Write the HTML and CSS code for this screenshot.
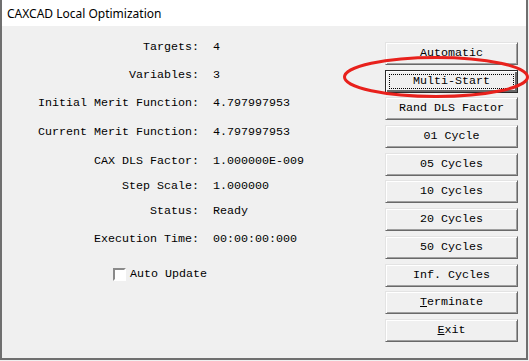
FILE: index.html
```html
<!DOCTYPE html>
<html>
<head>
<meta charset="utf-8">
<link rel="stylesheet" href="styles.css">
</head>
<body>
<div class="window">
  <div class="titlebar">CAXCAD Local Optimization</div>
  <div class="client">
    <div class="info">
      <div class="row r1"><span class="lbl">Targets:</span><span class="val">4</span></div>
      <div class="row r2"><span class="lbl">Variables:</span><span class="val">3</span></div>
      <div class="row r3"><span class="lbl">Initial Merit Function:</span><span class="val">4.797997953</span></div>
      <div class="row r4"><span class="lbl">Current Merit Function:</span><span class="val">4.797997953</span></div>
      <div class="row r5"><span class="lbl">CAX DLS Factor:</span><span class="val">1.000000E-009</span></div>
      <div class="row r6"><span class="lbl">Step Scale:</span><span class="val">1.000000</span></div>
      <div class="row r7"><span class="lbl">Status:</span><span class="val">Ready</span></div>
      <div class="row r8"><span class="lbl">Execution Time:</span><span class="val">00:00:00:000</span></div>
      <div class="check"><span class="box"></span><span>Auto Update</span></div>
    </div>
    <div class="buttons">
      <div class="btn">Automatic</div>
      <div class="btn focused"><span class="focus-rect">Multi-Start</span></div>
      <div class="btn">Rand DLS Factor</div>
      <div class="btn">01 Cycle</div>
      <div class="btn">05 Cycles</div>
      <div class="btn">10 Cycles</div>
      <div class="btn">20 Cycles</div>
      <div class="btn">50 Cycles</div>
      <div class="btn">Inf. Cycles</div>
      <div class="btn"><span class="u">T</span>erminate</div>
      <div class="btn"><span class="u">E</span>xit</div>
    </div>
  </div>
  <svg class="annot" width="529" height="361" viewBox="0 0 529 361">
    <ellipse cx="436" cy="77" rx="91.5" ry="19.5" fill="none" stroke="#e8211c" stroke-width="3"/>
  </svg>
</div>
</body>
</html>
```

FILE: styles.css
```css
html, body {
  margin: 0;
  padding: 0;
  background: #f0f0f0;
  width: 529px;
  height: 361px;
  overflow: hidden;
}
.window {
  position: relative;
  width: 524px;
  height: 358px;
  border-left: 2px solid #6f6f6f;
  border-right: 2px solid #6f6f6f;
  border-bottom: 2px solid #6f6f6f;
  background: #f0f0f0;
}
.titlebar {
  height: 26px;
  background: #ffffff;
  font-family: "Noto Sans", "Open Sans", sans-serif;
  font-size: 12px;
  line-height: 27px;
  padding-left: 5px;
  color: #000;
}
.client {
  display: flex;
  font-family: "Liberation Mono", "Courier New", monospace;
  font-size: 11.67px;
  color: #000;
}
.info {
  flex: 0 0 383px;
  padding-top: 14px;
}
.row {
  display: flex;
  height: 14px;
  line-height: 14px;
  white-space: pre;
}
.lbl {
  width: 197px;
  text-align: right;
}
.val {
  margin-left: 14px;
}
.r2 { margin-top: 14px; }
.r3 { margin-top: 14px; }
.r4 { margin-top: 15px; }
.r5 { margin-top: 15px; }
.r6 { margin-top: 11px; }
.r7 { margin-top: 11px; }
.r8 { margin-top: 14px; }
.check {
  display: flex;
  align-items: center;
  margin-top: 21px;
  margin-left: 111px;
  height: 14px;
  line-height: 14px;
  white-space: pre;
}
.box {
  width: 9px;
  height: 9px;
  margin-right: 4px;
  background: #fff;
  border-top: 2px solid #8a8a8a;
  border-left: 2px solid #8a8a8a;
  border-bottom: 2px solid #ffffff;
  border-right: 2px solid #ffffff;
  box-shadow: 0 0 0 0 transparent;
  outline: 0;
}
.buttons {
  width: 133px;
  padding-top: 16px;
  display: flex;
  flex-direction: column;
  gap: 4.7px;
}
.btn {
  box-sizing: border-box;
  height: 23px;
  line-height: 20px;
  text-align: center;
  background: #f0f0f0;
  border-top: 1px solid #e3e3e3;
  border-left: 1px solid #e3e3e3;
  border-bottom: 1px solid #696969;
  border-right: 1px solid #696969;
  box-shadow: inset 1px 1px 0 #ffffff, inset -1px -1px 0 #a0a0a0;
  white-space: pre;
}
.btn.focused {
  border: 1px solid #2a2a2a;
  box-shadow: inset 1px 1px 0 #ffffff, inset -2px -2px 0 #696969;
  padding: 3px 3px 3px 3px;
}
.focus-rect {
  display: block;
  height: 15px;
  line-height: 14px;
  outline: 1px dotted #000;
  outline-offset: -1px;
}
.u {
  text-decoration: underline;
}
.annot {
  position: absolute;
  left: -2px;
  top: 0;
  pointer-events: none;
}
```
